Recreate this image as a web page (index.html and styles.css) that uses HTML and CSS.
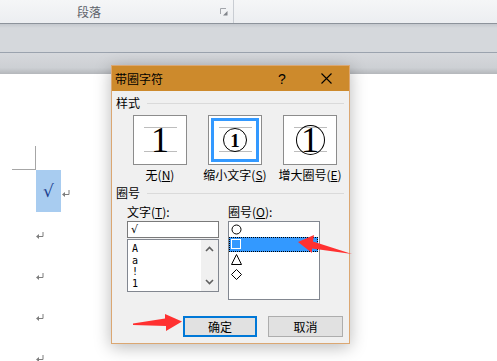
FILE: index.html
```html
<!DOCTYPE html>
<html>
<head>
    <meta charset="UTF-8">
    <title>带圈字符</title>
    <link rel="stylesheet" href="styles.css">
</head>
<body>
    <div class="ribbon">
        <div class="group">
            <span class="group-name">段落</span>
            <svg class="launcher" width="8" height="8" viewBox="0 0 8 8">
                <path d="M0.5 6V0.5H6" fill="none" stroke="#a3a6ab"/>
                <polygon points="3,7.5 7.5,7.5 7.5,3" fill="#80848a"/>
            </svg>
        </div>
    </div>
    <div class="toolbar"></div>
    <div class="gap"></div>

    <div class="page">
        <div class="crop"></div>
        <div class="para first">
            <span class="sel">√</span>
            <svg class="ret" width="8" height="7" viewBox="0 0 8 7"><path d="M7 0V4.5H2" fill="none" stroke="#7d7d7d"/><polygon points="0,4.5 3,2 3,7" fill="#7d7d7d"/></svg>
        </div>
        <div class="para"><svg class="ret" width="8" height="7" viewBox="0 0 8 7"><path d="M7 0V4.5H2" fill="none" stroke="#7d7d7d"/><polygon points="0,4.5 3,2 3,7" fill="#7d7d7d"/></svg></div>
        <div class="para"><svg class="ret" width="8" height="7" viewBox="0 0 8 7"><path d="M7 0V4.5H2" fill="none" stroke="#7d7d7d"/><polygon points="0,4.5 3,2 3,7" fill="#7d7d7d"/></svg></div>
        <div class="para"><svg class="ret" width="8" height="7" viewBox="0 0 8 7"><path d="M7 0V4.5H2" fill="none" stroke="#7d7d7d"/><polygon points="0,4.5 3,2 3,7" fill="#7d7d7d"/></svg></div>
        <div class="para"><svg class="ret" width="8" height="7" viewBox="0 0 8 7"><path d="M7 0V4.5H2" fill="none" stroke="#7d7d7d"/><polygon points="0,4.5 3,2 3,7" fill="#7d7d7d"/></svg></div>
    </div>

    <!-- 带圈字符 对话框 -->
    <div class="dialog">
        <div class="titlebar">
            <span class="title">带圈字符</span>
            <span class="help">?</span>
            <svg class="close" width="11" height="11" viewBox="0 0 11 11"><path d="M0.5 0.5L10.5 10.5M10.5 0.5L0.5 10.5" stroke="#000" stroke-width="1.1"/></svg>
        </div>
        <div class="dlg-body">
            <div class="section">
                <span>样式</span>
                <span class="rule"></span>
            </div>
            <div class="options">
                <div class="option">
                    <div class="sample"><span class="digit">1</span></div>
                    <span class="opt-label">无(<u>N</u>)</span>
                </div>
                <div class="option">
                    <div class="sample selected"><span class="ring small"><span>1</span></span></div>
                    <span class="opt-label">缩小文字(<u>S</u>)</span>
                </div>
                <div class="option">
                    <div class="sample"><span class="ring big"><span>1</span></span></div>
                    <span class="opt-label">增大圈号(<u>E</u>)</span>
                </div>
            </div>
            <div class="section second">
                <span>圈号</span>
                <span class="rule"></span>
            </div>
            <div class="cols">
                <div class="col">
                    <div class="col-label">文字(<u>T</u>):</div>
                    <div class="input">√</div>
                    <div class="list">
                        <div class="items">
                            <div>A</div>
                            <div>a</div>
                            <div>!</div>
                            <div>1</div>
                        </div>
                        <div class="scrollbar">
                            <svg width="9" height="6" viewBox="0 0 9 6"><path d="M1 5L4.5 1.5L8 5" fill="none" stroke="#606060" stroke-width="1.6"/></svg>
                            <svg width="9" height="6" viewBox="0 0 9 6"><path d="M1 1L4.5 4.5L8 1" fill="none" stroke="#606060" stroke-width="1.6"/></svg>
                        </div>
                    </div>
                </div>
                <div class="col">
                    <div class="col-label">圈号(<u>O</u>):</div>
                    <div class="shapes">
                        <div class="shape"><svg width="11" height="11" viewBox="0 0 11 11"><circle cx="5.5" cy="5.5" r="4.5" fill="none" stroke="#000"/></svg></div>
                        <div class="shape active"><svg width="11" height="11" viewBox="0 0 11 11"><rect x="0.5" y="0.5" width="9" height="9" fill="none" stroke="#fff"/></svg></div>
                        <div class="shape"><svg width="11" height="11" viewBox="0 0 11 11"><path d="M5.5 0.5L10.5 10.5H0.5Z" fill="none" stroke="#000"/></svg></div>
                        <div class="shape"><svg width="11" height="11" viewBox="0 0 11 11"><path d="M5.5 0.5L10.5 5.5L5.5 10.5L0.5 5.5Z" fill="none" stroke="#000"/></svg></div>
                    </div>
                </div>
            </div>
            <div class="buttons">
                <button class="btn primary">确定</button>
                <button class="btn">取消</button>
            </div>
        </div>
    </div>

    <svg class="arrows" width="497" height="361" viewBox="0 0 497 361">
        <polygon points="133,323.5 165,318.5 165,314 182,321.5 166,331 166,326 133,325" fill="#ff3131"/>
        <polygon points="298,242 314,235 313,241.5 352,254 312,248.5 312,253" fill="#ff3131"/>
    </svg>
</body>
</html>
```

FILE: styles.css
```css
* {
    box-sizing: border-box;
}

body {
    margin: 0;
    width: 497px;
    height: 361px;
    overflow: hidden;
    position: relative;
    background: #fff;
    font-family: "Noto Sans CJK SC", sans-serif;
    font-size: 12px;
    color: #000;
}

/* 功能区 */
.ribbon {
    height: 24px;
    background: linear-gradient(#f5f6f7, #eceef1);
    border-bottom: 1px solid #8d939b;
    display: flex;
}

.group {
    width: 234px;
    display: flex;
    align-items: center;
    padding-left: 77px;
    border-right: 1px solid #c9cdd3;
}

.group-name {
    color: #5d626b;
    line-height: 14px;
    width: 24px;
}

.launcher {
    margin-left: 119px;
}

.toolbar {
    height: 29px;
    background: linear-gradient(#c4c8ce, #d5d8dc 4px, #d5d8dc);
    border-bottom: 1px solid #9ba3ae;
}

.gap {
    height: 21px;
    background: linear-gradient(#d6d8dc, #cdd0d4 70%, #b4b7bb);
}

/* 文档页面 */
.page {
    padding: 72px 0 0 12px;
}

.crop {
    width: 24px;
    height: 24px;
    border-right: 1px solid #a6a6a6;
    border-bottom: 1px solid #a6a6a6;
}

.para {
    margin-left: 24px;
    height: 41px;
    display: flex;
    align-items: flex-start;
}

.para.first {
    height: 42px;
}

.ret {
    margin-top: 20px;
}

.sel {
    width: 25px;
    height: 42px;
    background: #a8ccf0;
    color: #1b3f8f;
    font-family: "DejaVu Sans", sans-serif;
    font-size: 17px;
    display: flex;
    align-items: center;
    justify-content: center;
    margin-right: 1px;
}

/* 对话框 */
.dialog {
    position: absolute;
    left: 111px;
    top: 65px;
    width: 239px;
    height: 279px;
    border: 1px solid #dba772;
    background: #f0f0f0;
    box-shadow: 0 3px 16px rgba(0, 0, 0, 0.28);
}

.titlebar {
    height: 25px;
    background: #cd8a2c;
    display: flex;
    align-items: center;
    padding-left: 3px;
}

.title {
    flex: 1;
    line-height: 14px;
}

.help {
    width: 20px;
    text-align: center;
    font-family: "Liberation Sans", sans-serif;
    font-size: 14px;
}

.close {
    margin: 0 17px 0 29px;
}

.dlg-body {
    padding-top: 5px;
}

.section {
    display: flex;
    align-items: center;
    gap: 7px;
    padding: 0 5px 0 4px;
    line-height: 14px;
}

.section.second {
    margin-top: 4px;
}

.rule {
    flex: 1;
    height: 1px;
    background: #dadada;
}

.options {
    display: flex;
    gap: 21px;
    margin: 5px 0 0 21px;
}

.option {
    width: 54px;
    display: flex;
    flex-direction: column;
    align-items: center;
}

.sample {
    width: 54px;
    height: 50px;
    border: 1px solid #8c8c8c;
    background-color: #fff;
    background-image: linear-gradient(#bdbdbd, #bdbdbd), linear-gradient(#bdbdbd, #bdbdbd);
    background-size: 33px 1px;
    background-position: center 11px, center 35px;
    background-repeat: no-repeat;
    display: flex;
    align-items: center;
    justify-content: center;
    font-family: "Liberation Serif", serif;
}

.sample.selected {
    box-shadow: inset 0 0 0 2px #fff, inset 0 0 0 5px #3399ff;
}

.digit {
    font-size: 36px;
    line-height: 1;
}

.ring {
    border: 1px solid #000;
    border-radius: 50%;
    display: flex;
    align-items: center;
    justify-content: center;
    line-height: 1;
}

.ring.small {
    width: 24px;
    height: 24px;
    font-size: 19px;
    font-weight: bold;
}

.ring.big {
    width: 29px;
    height: 30px;
    font-size: 36px;
}

.opt-label {
    margin-top: 3px;
    line-height: 14px;
    white-space: nowrap;
}

.cols {
    display: flex;
    gap: 9px;
    margin: 5px 0 0 15px;
}

.col {
    width: 92px;
}

.col-label {
    line-height: 14px;
    margin-bottom: 2px;
}

.input {
    height: 17px;
    border: 1px solid #7a7a7a;
    background: #fff;
    padding-left: 3px;
    line-height: 15px;
    font-family: "DejaVu Sans", sans-serif;
    font-size: 11px;
}

.list {
    margin-top: 1px;
    height: 53px;
    border: 1px solid #828790;
    background: #fff;
    display: flex;
}

.items {
    flex: 1;
    padding: 3px 0 0 4px;
    font-family: "DejaVu Sans Mono", monospace;
    font-size: 10px;
    line-height: 11.7px;
}

.scrollbar {
    width: 17px;
    background: #f0f0f0;
    display: flex;
    flex-direction: column;
    align-items: center;
    justify-content: space-between;
    padding: 6px 0 6px;
}

.shapes {
    height: 79px;
    border: 1px solid #828790;
    background: #fff;
}

.shape {
    height: 15px;
    display: flex;
    align-items: center;
    padding-left: 2px;
    margin-right: 1px;
}

.shape.active {
    background: #3399ff;
    outline: 1px dotted #000;
    outline-offset: -1px;
}

.buttons {
    display: flex;
    justify-content: flex-end;
    gap: 11px;
    margin-top: 16px;
    padding-right: 6px;
}

.btn {
    width: 75px;
    height: 21px;
    padding: 0;
    border: 1px solid #adadad;
    background: #e1e1e1;
    font-family: "Noto Sans CJK SC", sans-serif;
    font-size: 12px;
    color: #000;
}

.btn.primary {
    width: 74px;
    border: 2px solid #0078d7;
}

.arrows {
    position: absolute;
    left: 0;
    top: 0;
    pointer-events: none;
}
```
